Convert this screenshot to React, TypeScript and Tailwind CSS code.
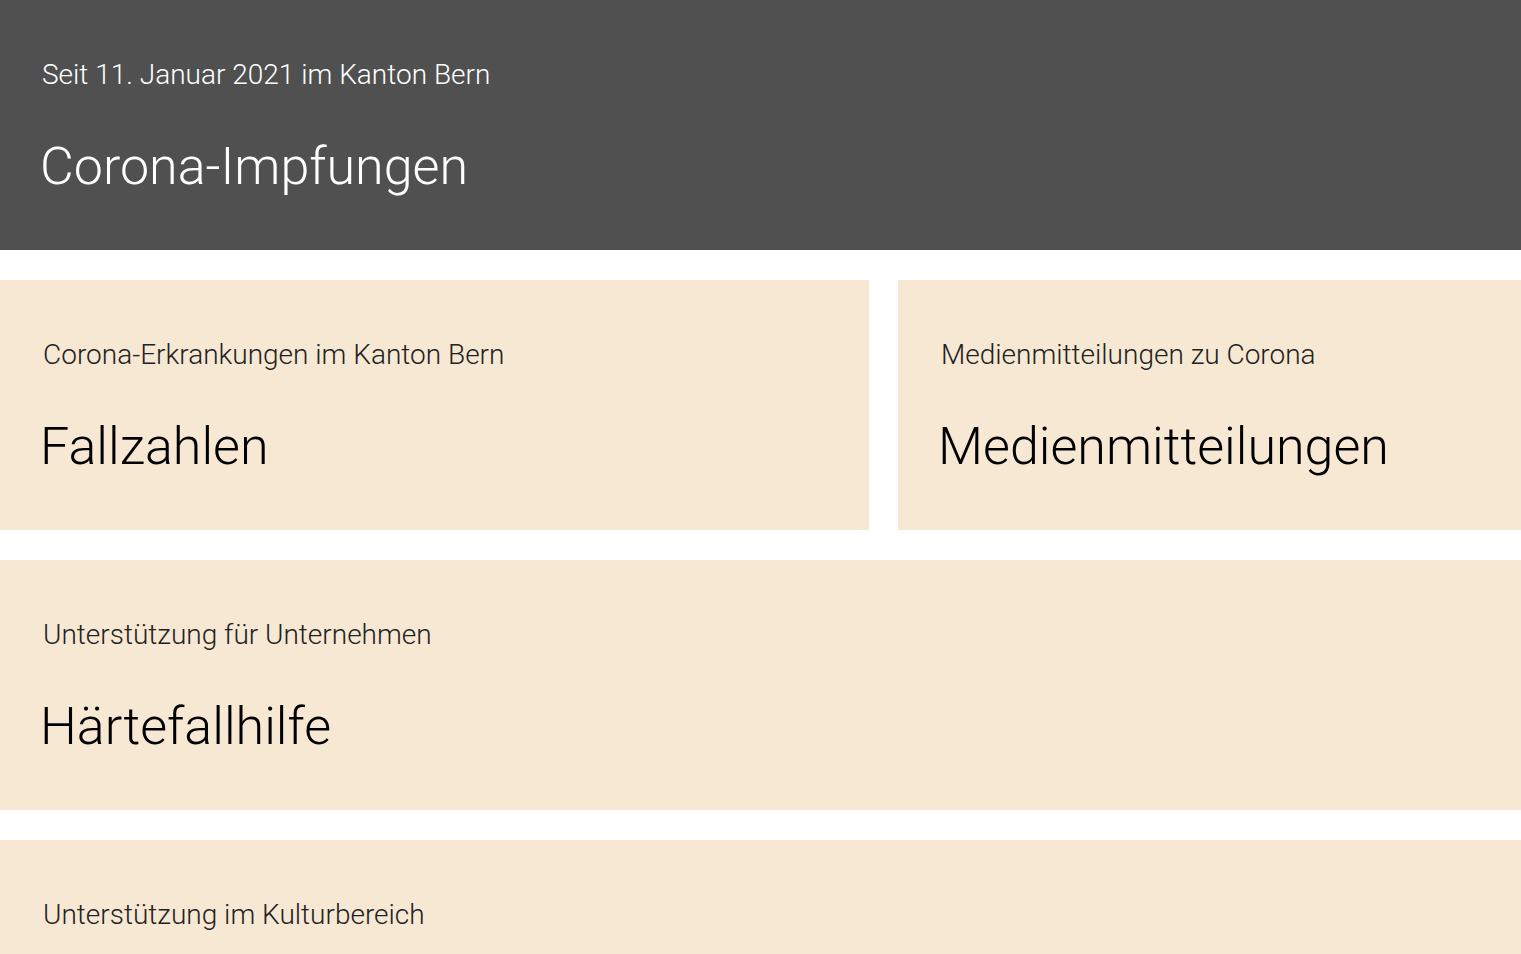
export default function App() {
  const font = { fontFamily: "Roboto, 'Liberation Sans', sans-serif" };
  return (
    <div className="min-h-screen bg-white" style={font}>
      <div className="flex h-[250px] flex-col bg-[#505050] px-10 pt-[57px] text-white">
        <p className="pl-[2px] text-[28px] font-light leading-[36px]">Seit 11. Januar 2021 im Kanton Bern</p>
        <h1 className="mt-[42px] text-[52px] font-light leading-[64px]">Corona-Impfungen</h1>
      </div>

      <div className="mt-[30px] flex gap-[29px]">
        <Card className="w-[869px]" sub="Corona-Erkrankungen im Kanton Bern" title="Fallzahlen" />
        <Card className="flex-1" sub="Medienmitteilungen zu Corona" title="Medienmitteilungen" />
      </div>

      <Card className="mt-[30px]" sub="Unterstützung für Unternehmen" title="Härtefallhilfe" />
      <Card className="mt-[30px]" sub="Unterstützung im Kulturbereich" />
    </div>
  );
}

function Card({ sub, title, className = "" }: { sub: string; title?: string; className?: string }) {
  return (
    <div className={`flex h-[250px] flex-col bg-[#f7e8d4] px-10 pt-[57px] ${className}`}>
      <p className="pl-[3px] text-[28px] font-light leading-[36px] text-[#222]">{sub}</p>
      {title && <h2 className="mt-[42px] text-[52px] font-light leading-[64px] text-black">{title}</h2>}
    </div>
  );
}
